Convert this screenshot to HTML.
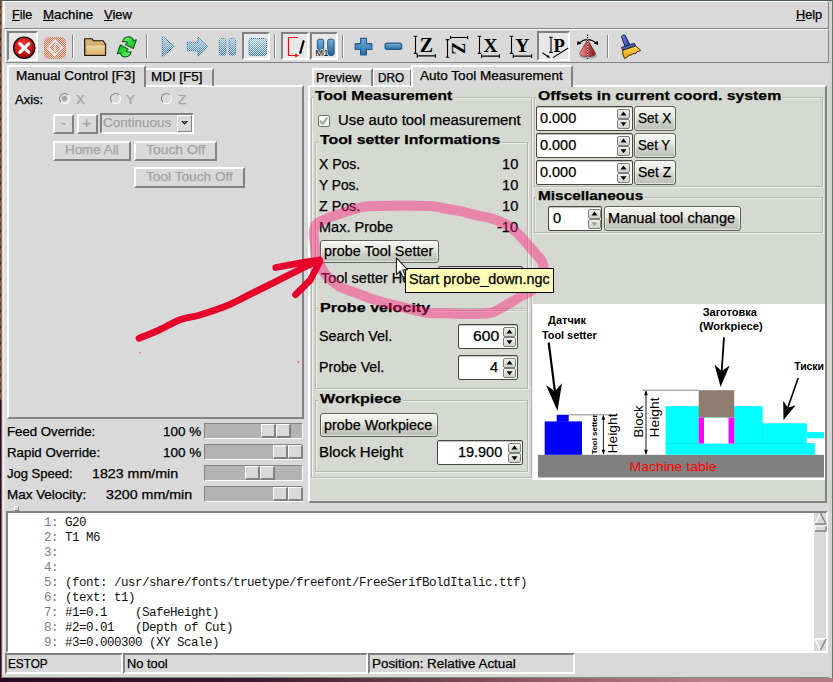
<!DOCTYPE html>
<html><head><meta charset="utf-8"><title>AXIS</title>
<style>
html,body{margin:0;padding:0;background:#d9d9d9;}
#root{position:relative;width:833px;height:682px;overflow:hidden;background:#d9d9d9;font-family:"Liberation Sans",sans-serif;}
#root div,#root svg{position:absolute;box-sizing:border-box;}
.t{position:absolute;white-space:pre;line-height:20px;height:20px;transform-origin:0 0;-webkit-text-stroke:0.25px currentColor;}
.t u{text-decoration:underline;text-underline-offset:1px;}
.sunk{border:2px solid;border-color:#828282 #fff #fff #828282;}
.rais{border:2px solid;border-color:#fff #828282 #828282 #fff;}
.sunk1{border:1px solid;border-color:#828282 #fff #fff #828282;}
.rais1{border:1px solid;border-color:#fff #828282 #828282 #fff;}
.gbtn{border:1px solid #5f6259;border-radius:3px;background:linear-gradient(#f5f6f3,#e6e8e2 42%,#d0d3cb 58%,#bbbeb5);box-shadow:inset 0 0 0 1px rgba(255,255,255,.55);}
.gent{border:1px solid #45473f;border-radius:2px;background:#fff;box-shadow:inset 0 1px 1px rgba(0,0,0,.25);}
.gfr{border:1px solid #b4b7ae;box-shadow:inset 1px 1px 0 rgba(255,255,255,.6), 1px 1px 0 rgba(255,255,255,.6);}
.mono{font-family:"Liberation Mono",monospace;-webkit-text-stroke:0;}

</style></head><body>
<div id="root">
<div style="left:0px;top:0px;width:1px;height:400px;background:repeating-linear-gradient(180deg,#6b4020 0,#7a5030 5px,#3a1a10 7px,#a06a40 11px,#5a3018 16px)"></div>
<div style="left:1px;top:0px;width:1px;height:400px;background:#8a7666"></div>
<div style="left:0px;top:400px;width:1px;height:282px;background:#2c0a24"></div>
<div style="left:1px;top:400px;width:1px;height:282px;background:#6a5866"></div>
<div style="left:2px;top:1px;width:1px;height:676px;background:#d2d2d2"></div>
<div style="left:0px;top:0px;width:833px;height:1px;background:#4a5853"></div>
<div style="left:3px;top:674px;width:830px;height:4px;background:#d6d9d2"></div>
<div style="left:0px;top:678px;width:833px;height:4px;background:linear-gradient(90deg,#2a0a22 0%,#3c1a2c 30%,#6a3e4c 50%,#a06470 70%,#bc7e88 85%,#b47882 100%)"></div>
<div style="left:2px;top:677px;width:829px;height:1px;background:#7c8a80"></div>
<div style="left:829px;top:1px;width:4px;height:677px;background:#d2d6ce"></div>
<div style="left:832px;top:0px;width:1px;height:678px;background:#6e746e"></div>
<div style="left:3px;top:63px;width:1px;height:611px;background:#f2f2f2"></div>
<div style="left:4px;top:63px;width:3px;height:611px;background:#dedede"></div>
<div style="left:3px;top:1px;width:826px;height:28px;border-top:1px solid #fff;border-left:2px solid #fff;border-bottom:1px solid #828282;border-right:1px solid #828282"></div>
<div style="left:5px;top:29px;width:824px;height:34px;border-top:1px solid #fff;border-left:1px solid #fff;border-bottom:1px solid #828282;border-right:1px solid #828282"></div>
<div class="sunk" style="left:7px;top:31px;width:31px;height:30px;background:#e8e8e8"></div>
<div class="sunk" style="left:242px;top:32px;width:28px;height:28px;background:#e8e8e8"></div>
<div class="sunk" style="left:281px;top:32px;width:28px;height:28px;background:#e8e8e8"></div>
<div class="sunk" style="left:310px;top:32px;width:28px;height:28px;background:#e8e8e8"></div>
<div class="sunk" style="left:537px;top:31px;width:33px;height:30px;background:#e8e8e8"></div>
<div style="left:72px;top:35px;width:2px;height:23px;border-left:1px solid #828282;border-right:1px solid #fff"></div>
<div style="left:146px;top:35px;width:2px;height:23px;border-left:1px solid #828282;border-right:1px solid #fff"></div>
<div style="left:274px;top:35px;width:2px;height:23px;border-left:1px solid #828282;border-right:1px solid #fff"></div>
<div style="left:342px;top:35px;width:2px;height:23px;border-left:1px solid #828282;border-right:1px solid #fff"></div>
<div style="left:607px;top:35px;width:2px;height:23px;border-left:1px solid #828282;border-right:1px solid #fff"></div>
<div class="rais" style="left:7px;top:85px;width:297px;height:334px;"></div>
<div style="left:146px;top:68px;width:68px;height:18px;border:2px solid;border-color:#fff #828282 transparent transparent;border-bottom:0;border-left:0"></div>
<div style="left:7px;top:65px;width:139px;height:22px;background:#d9d9d9;border:2px solid;border-color:#fff #828282 transparent #fff;border-bottom:0"></div>
<div style="left:59.2px;top:93.2px;width:11px;height:11px;border-radius:50%;background:#d9d9d9;border:1.5px solid;border-color:#858585 #fff #fff #858585;transform:rotate(0deg)"></div>
<div style="left:110.2px;top:93.2px;width:11px;height:11px;border-radius:50%;background:#d9d9d9;border:1.5px solid;border-color:#858585 #fff #fff #858585;transform:rotate(0deg)"></div>
<div style="left:161.2px;top:93.2px;width:11px;height:11px;border-radius:50%;background:#d9d9d9;border:1.5px solid;border-color:#858585 #fff #fff #858585;transform:rotate(0deg)"></div>
<div style="left:62.2px;top:96.2px;width:5px;height:5px;border-radius:50%;background:#a3a3a3"></div>
<div class="rais" style="left:53px;top:114px;width:21px;height:20px;"></div>
<div class="rais" style="left:77px;top:114px;width:21px;height:20px;"></div>
<div class="sunk" style="left:100px;top:113px;width:94px;height:21px;"></div>
<div class="rais1" style="left:177px;top:115px;width:15px;height:17px;"></div>
<div class="rais" style="left:53px;top:141px;width:78px;height:20px;"></div>
<div class="rais" style="left:134px;top:141px;width:83px;height:20px;"></div>
<div class="rais" style="left:134px;top:167px;width:111px;height:21px;"></div>
<div style="left:204px;top:423px;width:99px;height:16px;background:#b3b3b3;border:1px solid;border-color:#828282 #fff #fff #828282"></div>
<div style="left:261px;top:424px;width:15px;height:14px;background:#d9d9d9;border-style:solid;border-width:1px 2px 2px 1px;border-color:#fff #828282 #828282 #fff"></div>
<div style="left:276px;top:424px;width:15px;height:14px;background:#d9d9d9;border-style:solid;border-width:1px 2px 2px 1px;border-color:#fff #828282 #828282 #fff"></div>
<div style="left:204px;top:444px;width:99px;height:16px;background:#b3b3b3;border:1px solid;border-color:#828282 #fff #fff #828282"></div>
<div style="left:273px;top:445px;width:15px;height:14px;background:#d9d9d9;border-style:solid;border-width:1px 2px 2px 1px;border-color:#fff #828282 #828282 #fff"></div>
<div style="left:288px;top:445px;width:15px;height:14px;background:#d9d9d9;border-style:solid;border-width:1px 2px 2px 1px;border-color:#fff #828282 #828282 #fff"></div>
<div style="left:204px;top:465px;width:99px;height:16px;background:#b3b3b3;border:1px solid;border-color:#828282 #fff #fff #828282"></div>
<div style="left:245px;top:466px;width:15px;height:14px;background:#d9d9d9;border-style:solid;border-width:1px 2px 2px 1px;border-color:#fff #828282 #828282 #fff"></div>
<div style="left:260px;top:466px;width:15px;height:14px;background:#d9d9d9;border-style:solid;border-width:1px 2px 2px 1px;border-color:#fff #828282 #828282 #fff"></div>
<div style="left:204px;top:486px;width:99px;height:16px;background:#b3b3b3;border:1px solid;border-color:#828282 #fff #fff #828282"></div>
<div style="left:273px;top:487px;width:15px;height:14px;background:#d9d9d9;border-style:solid;border-width:1px 2px 2px 1px;border-color:#fff #828282 #828282 #fff"></div>
<div style="left:288px;top:487px;width:15px;height:14px;background:#d9d9d9;border-style:solid;border-width:1px 2px 2px 1px;border-color:#fff #828282 #828282 #fff"></div>
<div class="rais" style="left:308px;top:85px;width:519px;height:418px;background:#d6d9d1"></div>
<div style="left:312px;top:68px;width:61px;height:18px;border:2px solid;border-color:#fff #828282 transparent #fff;border-bottom:0"></div>
<div style="left:373px;top:68px;width:39px;height:18px;border:2px solid;border-color:#fff #828282 transparent #fff;border-bottom:0;border-left-width:1px"></div>
<div style="left:411px;top:65px;width:162px;height:22px;background:#d9d9d9;border:2px solid;border-color:#fff #828282 transparent #fff;border-bottom:0"></div>
<div class="gfr" style="left:311px;top:97px;width:221px;height:381px;"></div>
<div class="gfr" style="left:315px;top:142px;width:213px;height:169px;"></div>
<div class="gfr" style="left:315px;top:308px;width:213px;height:81px;"></div>
<div class="gfr" style="left:315px;top:400px;width:213px;height:72px;"></div>
<div class="gfr" style="left:534px;top:97px;width:289px;height:90px;"></div>
<div class="gfr" style="left:534px;top:197px;width:289px;height:36px;"></div>
<div style="left:314px;top:90px;width:140px;height:14px;background:#d6d9d1"></div>
<div style="left:318px;top:136px;width:184px;height:14px;background:#d6d9d1"></div>
<div style="left:318px;top:302px;width:114px;height:14px;background:#d6d9d1"></div>
<div style="left:318px;top:393px;width:85px;height:14px;background:#d6d9d1"></div>
<div style="left:536px;top:90px;width:247px;height:14px;background:#d6d9d1"></div>
<div style="left:536px;top:190px;width:109px;height:14px;background:#d6d9d1"></div>
<div style="left:318px;top:115px;width:12px;height:12px;background:linear-gradient(#fff,#eef0ec);border:1px solid #6f7269;border-radius:2px"></div>
<div class="gbtn" style="left:320px;top:239.5px;width:119px;height:23.5px;"></div>
<div class="gent" style="left:438px;top:266px;width:85px;height:24px;"></div>
<div class="gent" style="left:458px;top:324px;width:60px;height:25px;"></div>
<div class="gent" style="left:458px;top:355px;width:60px;height:25px;"></div>
<div class="gbtn" style="left:320px;top:413px;width:118px;height:24px;"></div>
<div class="gent" style="left:437px;top:440px;width:86px;height:25px;"></div>
<div class="gent" style="left:536px;top:106px;width:97px;height:25px;"></div>
<div class="gbtn" style="left:634px;top:106px;width:42px;height:25px;"></div>
<div class="gent" style="left:536px;top:133px;width:97px;height:25px;"></div>
<div class="gbtn" style="left:634px;top:133px;width:42px;height:25px;"></div>
<div class="gent" style="left:536px;top:160px;width:97px;height:25px;"></div>
<div class="gbtn" style="left:634px;top:160px;width:42px;height:25px;"></div>
<div class="gent" style="left:548px;top:206px;width:54px;height:25px;"></div>
<div class="gbtn" style="left:604px;top:206px;width:137px;height:25px;"></div>
<div style="left:533px;top:304px;width:292px;height:176px;background:#fff"></div>
<div class="sunk" style="left:6px;top:511px;width:822px;height:142px;background:#fff"></div>
<div style="left:814px;top:513px;width:12px;height:138px;background:#d9d9d9"></div>
<div class="sunk" style="left:5px;top:653px;width:118px;height:21px;"></div>
<div class="sunk" style="left:123px;top:653px;width:245px;height:21px;"></div>
<div class="sunk" style="left:368px;top:653px;width:207px;height:21px;"></div>
<svg style="left:0;top:29px" width="833" height="34" viewBox="0 29 833 34">
<defs>
<pattern id="st2" width="2" height="2" patternUnits="userSpaceOnUse"><rect x="0" y="0" width="1" height="1" fill="#e8e8e8"/><rect x="1" y="1" width="1" height="1" fill="#e8e8e8"/></pattern>
<pattern id="st" width="2" height="2" patternUnits="userSpaceOnUse"><rect x="0" y="0" width="1" height="1" fill="#d9d9d9"/><rect x="1" y="1" width="1" height="1" fill="#d9d9d9"/></pattern>
<linearGradient id="gb" x1="0" y1="0" x2="0" y2="1"><stop offset="0" stop-color="#9fd4ee"/><stop offset="1" stop-color="#1f6fa8"/></linearGradient>
<linearGradient id="gb2" x1="0" y1="0" x2="0" y2="1"><stop offset="0" stop-color="#6fb2e0"/><stop offset="1" stop-color="#2a6c9e"/></linearGradient>
<linearGradient id="gbar" x1="0" y1="0" x2="0" y2="1"><stop offset="0" stop-color="#78b0dc"/><stop offset="1" stop-color="#1c5f96"/></linearGradient>
<radialGradient id="gr" cx="0.4" cy="0.3" r="0.8"><stop offset="0" stop-color="#ee3838"/><stop offset="0.6" stop-color="#c81010"/><stop offset="1" stop-color="#8c0000"/></radialGradient>
<linearGradient id="gf" x1="0" y1="0" x2="0" y2="1"><stop offset="0" stop-color="#f3d9a4"/><stop offset="1" stop-color="#d8ae68"/></linearGradient>
<linearGradient id="gc" x1="0" y1="0" x2="1" y2="0"><stop offset="0" stop-color="#f4a0a0"/><stop offset="0.45" stop-color="#d04848"/><stop offset="1" stop-color="#7a1c1c"/></linearGradient>
<linearGradient id="gh" x1="0" y1="0" x2="1" y2="0"><stop offset="0" stop-color="#6f8fe0"/><stop offset="1" stop-color="#2a3f98"/></linearGradient>
<linearGradient id="gy" x1="0" y1="0" x2="0" y2="1"><stop offset="0" stop-color="#ffd84a"/><stop offset="1" stop-color="#e89a10"/></linearGradient>
<linearGradient id="gg" x1="0" y1="0" x2="1" y2="1"><stop offset="0" stop-color="#84f884"/><stop offset="0.5" stop-color="#30d838"/><stop offset="1" stop-color="#14b01c"/></linearGradient>
</defs>
<circle cx="24.2" cy="47.7" r="10.6" fill="url(#gr)" stroke="#1a0000" stroke-width="1.4"/>
<path d="M19.8,43.6 L28.8,52.4 M28.8,43.6 L19.8,52.4" stroke="#fff" stroke-width="3.2" stroke-linecap="round"/>
<rect x="44" y="37" width="22" height="22" rx="5" fill="#de7248"/>
<path d="M55,40.5 L62,47.8 L55,55.2 L48,47.8 Z" fill="none" stroke="#f4f0ee" stroke-width="2"/>
<path d="M55,44 V52" stroke="#f4f0ee" stroke-width="1.4"/>
<rect x="44" y="37" width="22" height="22" fill="url(#st)"/>
<path d="M84.7,55.3 V38.7 H91.8 L93.3,40.7 H103.1 L105.6,44.5 V55.3 Z" fill="#d9b474" stroke="#0c0800" stroke-width="1.15" stroke-linejoin="round"/>
<path d="M86.1,54.7 V46.6 Q86.1,44.9 88,44.9 H105 V54.7 Z" fill="url(#gf)" stroke="#a8844a" stroke-width="0.5"/>
<g transform="translate(126.8,46.8) scale(0.94)"><path d="M-4.6,-5.3 C-4,-8 -1.5,-10.6 1.8,-10.7 C4.5,-10.7 6.3,-9 6.9,-6.7 L10.2,-7.5 L6.9,1.9 L-1.5,-2.5 L0.9,-4.6 C0,-5.8 -2,-5.8 -4.6,-5.3 Z" fill="url(#gg)" stroke="#085210" stroke-width="1.1" stroke-linejoin="round"/><path d="M-4.6,-5.3 C-4,-8 -1.5,-10.6 1.8,-10.7 C4.5,-10.7 6.3,-9 6.9,-6.7 L10.2,-7.5 L6.9,1.9 L-1.5,-2.5 L0.9,-4.6 C0,-5.8 -2,-5.8 -4.6,-5.3 Z" transform="rotate(180)" fill="url(#gg)" stroke="#085210" stroke-width="1.1" stroke-linejoin="round"/></g>
<path d="M162.3,36.3 L174.4,46.5 L162.3,56.8 Z" fill="url(#gb)" stroke="#1a5c94" stroke-width="1"/>
<path d="M187.3,42.3 H198 V36.6 L208.3,46.5 L198,56.6 V50.8 H187.3 Z" fill="url(#gb)" stroke="#1a5c94" stroke-width="1" stroke-linejoin="round"/>
<rect x="219.3" y="38.3" width="6.6" height="16.8" rx="2" fill="url(#gb)" stroke="#1a5c94"/>
<rect x="229.1" y="38.3" width="6.6" height="16.8" rx="2" fill="url(#gb)" stroke="#1a5c94"/>
<rect x="249" y="38.6" width="17.4" height="16.8" rx="2" fill="url(#gb)" stroke="#1a5c94"/>
<rect x="161" y="35" width="15" height="23" fill="url(#st)"/>
<rect x="186" y="35" width="24" height="23" fill="url(#st)"/>
<rect x="218" y="37" width="19" height="19" fill="url(#st)"/>
<rect x="248" y="38" width="19" height="18" fill="url(#st2)"/>
<path d="M298,37.5 H288.5 V55.5 H296" fill="none" stroke="#ff0000" stroke-width="1.2"/>
<path d="M295.2,53.4 L299,55.5 L295.2,57.6 Z" fill="#ff0000"/>
<path d="M303.8,40.4 L300.1,53.6" stroke="#000" stroke-width="2.1"/>
<rect x="317.3" y="39.2" width="6.4" height="16.2" rx="2" fill="url(#gbar)" stroke="#1d4f7e" stroke-width="0.9"/>
<rect x="327.7" y="39.2" width="6.4" height="16.2" rx="2" fill="url(#gbar)" stroke="#1d4f7e" stroke-width="0.9"/>
<text x="315.3" y="56.3" font-family="Liberation Sans" font-size="9.2" fill="#000" stroke="#f0f0f0" stroke-width="1.3" paint-order="stroke" textLength="13.2" lengthAdjust="spacingAndGlyphs">M1</text>
<path d="M360.6,38.3 h5.8 v5.4 h5.4 v5.8 h-5.4 v5.4 h-5.8 v-5.4 h-5.4 v-5.8 h5.4 z" fill="url(#gb2)" stroke="#1f5a8c" stroke-width="1.2" stroke-linejoin="round"/>
<rect x="385.1" y="43.2" width="16.6" height="6.2" rx="2.2" fill="url(#gb2)" stroke="#1f5a8c" stroke-width="1.2"/>
<path d="M415.5,36.2 V53.4 M413.7,36.2 H417.3 M413.7,53.4 H417.3" stroke="#000" stroke-width="1.1" fill="none"/>
<text x="419.8" y="52.3" font-family="Liberation Serif" font-weight="bold" font-size="20" fill="#000" >Z</text>
<path d="M417.2,55.9 H435.4 M417.2,54.1 V57.699999999999996 M435.4,54.1 V57.699999999999996" stroke="#000" stroke-width="1.1" fill="none"/>
<path d="M447.5,39.6 V57.2 M445.7,39.6 H449.3 M445.7,57.2 H449.3" stroke="#000" stroke-width="1.1" fill="none"/>
<path d="M450.6,37.5 H467.6 M450.6,35.7 V39.3 M467.6,35.7 V39.3" stroke="#000" stroke-width="1.1" fill="none"/>
<g transform="translate(451.8,42.6) rotate(90)"><text x="0" y="0" font-family="Liberation Serif" font-weight="bold" font-size="18" fill="#000" >Z</text></g>
<path d="M479.5,36.2 V53.4 M477.7,36.2 H481.3 M477.7,53.4 H481.3" stroke="#000" stroke-width="1.1" fill="none"/>
<text x="483.4" y="52.3" font-family="Liberation Serif" font-weight="bold" font-size="19.5" fill="#000" >X</text>
<path d="M481.6,56.1 H499.4 M481.6,54.300000000000004 V57.9 M499.4,54.300000000000004 V57.9" stroke="#000" stroke-width="1.1" fill="none"/>
<path d="M511.5,36.2 V53.4 M509.7,36.2 H513.3 M509.7,53.4 H513.3" stroke="#000" stroke-width="1.1" fill="none"/>
<text x="515.2" y="52.3" font-family="Liberation Serif" font-weight="bold" font-size="19.5" fill="#000" >Y</text>
<path d="M513.2,56.1 H531.6 M513.2,54.300000000000004 V57.9 M531.6,54.300000000000004 V57.9" stroke="#000" stroke-width="1.1" fill="none"/>
<path d="M551,37.2 V52.4 M549.2,37.2 H552.8 M549.2,52.4 H552.8" stroke="#000" stroke-width="1.1" fill="none"/>
<text x="553.6" y="51.9" font-family="Liberation Serif" font-weight="bold" font-size="18.6" fill="#000" >P</text>
<path d="M542.4,52.8 L549.4,57.4 M553,57.6 L568.2,48" stroke="#000" stroke-width="1.1" fill="none"/>
<path d="M549.8,57.8 L546.2,57.2 L548,54.8 Z" fill="#000"/>
<ellipse cx="588.5" cy="56" rx="9" ry="3" fill="#8c8c8c" opacity="0.55"/>
<path d="M587.6,39.4 L579.6,53.6 A8,3.2 0 0 0 595.6,53.6 Z" fill="url(#gc)" stroke="#5a1010" stroke-width="0.6"/>
<path d="M578.6,43.4 Q587.6,35.6 596.6,43.4" stroke="#000" stroke-width="1.2" fill="none"/>
<path d="M577,45 L577.6,40.8 L581.4,43.6 Z M598.2,45 L597.6,40.8 L593.8,43.6 Z" fill="#000"/>
<path d="M587.6,34.4 V59" stroke="#fff" stroke-width="1.2"/>
<path d="M587.6,34.4 V59" stroke="#000" stroke-width="1.2" stroke-dasharray="1.3,1.3"/>
<path d="M621.4,36.4 Q622.6,34.4 625,35.2 L629.6,44.2 L625,46.4 Z" fill="url(#gh)" stroke="#101a50" stroke-width="1" stroke-linejoin="round"/>
<path d="M621.6,47.4 L634.3,43.3 L635.6,46 L622.8,50.4 Z" fill="#4a66c0" stroke="#101a50" stroke-width="0.9" stroke-linejoin="round"/>
<path d="M622.7,50.3 L635.5,46 L640.8,50.4 L636.6,52 L636,53.4 L632.6,53.8 L631.5,55 L629,55.2 L628.4,56.2 L624.6,58.6 Q622.2,55 622.7,50.3 Z" fill="url(#gy)" stroke="#2a1a00" stroke-width="0.9" stroke-linejoin="round"/>
</svg>
<span class="t mono" style="left:9px;top:512.97px;font-size:12.5px;letter-spacing:-0.5px;color:#111"><span style="color:#808080">     1:</span> G20</span>
<span class="t mono" style="left:9px;top:527.97px;font-size:12.5px;letter-spacing:-0.5px;color:#111"><span style="color:#808080">     2:</span> T1 M6</span>
<span class="t mono" style="left:9px;top:542.97px;font-size:12.5px;letter-spacing:-0.5px;color:#111"><span style="color:#808080">     3:</span> </span>
<span class="t mono" style="left:9px;top:557.97px;font-size:12.5px;letter-spacing:-0.5px;color:#111"><span style="color:#808080">     4:</span> </span>
<span class="t mono" style="left:9px;top:572.97px;font-size:12.5px;letter-spacing:-0.5px;color:#111"><span style="color:#808080">     5:</span> (font: /usr/share/fonts/truetype/freefont/FreeSerifBoldItalic.ttf)</span>
<span class="t mono" style="left:9px;top:587.97px;font-size:12.5px;letter-spacing:-0.5px;color:#111"><span style="color:#808080">     6:</span> (text: t1)</span>
<span class="t mono" style="left:9px;top:602.97px;font-size:12.5px;letter-spacing:-0.5px;color:#111"><span style="color:#808080">     7:</span> #1=0.1    (SafeHeight)</span>
<span class="t mono" style="left:9px;top:617.97px;font-size:12.5px;letter-spacing:-0.5px;color:#111"><span style="color:#808080">     8:</span> #2=0.01   (Depth of Cut)</span>
<span class="t mono" style="left:9px;top:632.97px;font-size:12.5px;letter-spacing:-0.5px;color:#111"><span style="color:#808080">     9:</span> #3=0.000300 (XY Scale)</span>
<svg style="left:814px;top:512px" width="13" height="140" viewBox="0 0 13 140"><path d="M6.5,1 L1,12 H12 Z" fill="#d9d9d9"/><path d="M6.5,1 L1,12" stroke="#fff" stroke-width="1.4"/><path d="M6.5,1 L12,12 H1" stroke="#828282" stroke-width="1.4" fill="none"/><rect x="1" y="14" width="11" height="5" fill="#d9d9d9"/><path d="M1,19 V14 H12" stroke="#fff" stroke-width="1.2" fill="none"/><path d="M12,14 V19 H1" stroke="#828282" stroke-width="1.4" fill="none"/><path d="M1,127 H12 L6.5,138 Z" fill="#d9d9d9"/><path d="M12,127 H1 L6.5,138" stroke="#fff" stroke-width="1.4" fill="none"/><path d="M6.5,138 L12,127" stroke="#828282" stroke-width="1.4"/></svg>
<div class="rais1" style="left:14px;top:506px;width:5px;height:5px;"></div>
<svg style="left:177px;top:115px" width="15" height="17" viewBox="177 115 15 17"><path d="M181.2,121 L184.6,124.8 L188,121 L186.4,121 L184.6,123 L182.8,121 Z" fill="#000"/><path d="M183,121 h3.2 l-1.6,1.6 Z" fill="#555"/></svg>
<div style="left:617px;top:108.5px;width:13px;height:10px;border:1px solid #7d8078;border-radius:2px;background:linear-gradient(#f1f2ee,#cfd2ca)"></div><svg style="left:0;top:0" width="833" height="682"><path d="M620.5,115.5 L623.5,111.5 L626.5,115.5 Z" fill="#000"/></svg><div style="left:617px;top:119.0px;width:13px;height:10px;border:1px solid #7d8078;border-radius:2px;background:linear-gradient(#f1f2ee,#cfd2ca)"></div><svg style="left:0;top:0" width="833" height="682"><path d="M620.5,122.2 L623.5,126.2 L626.5,122.2 Z" fill="#000"/></svg>
<div style="left:617px;top:135.5px;width:13px;height:10px;border:1px solid #7d8078;border-radius:2px;background:linear-gradient(#f1f2ee,#cfd2ca)"></div><svg style="left:0;top:0" width="833" height="682"><path d="M620.5,142.5 L623.5,138.5 L626.5,142.5 Z" fill="#000"/></svg><div style="left:617px;top:146.0px;width:13px;height:10px;border:1px solid #7d8078;border-radius:2px;background:linear-gradient(#f1f2ee,#cfd2ca)"></div><svg style="left:0;top:0" width="833" height="682"><path d="M620.5,149.2 L623.5,153.2 L626.5,149.2 Z" fill="#000"/></svg>
<div style="left:617px;top:162.5px;width:13px;height:10px;border:1px solid #7d8078;border-radius:2px;background:linear-gradient(#f1f2ee,#cfd2ca)"></div><svg style="left:0;top:0" width="833" height="682"><path d="M620.5,169.5 L623.5,165.5 L626.5,169.5 Z" fill="#000"/></svg><div style="left:617px;top:173.0px;width:13px;height:10px;border:1px solid #7d8078;border-radius:2px;background:linear-gradient(#f1f2ee,#cfd2ca)"></div><svg style="left:0;top:0" width="833" height="682"><path d="M620.5,176.2 L623.5,180.2 L626.5,176.2 Z" fill="#000"/></svg>
<div style="left:588px;top:208.5px;width:13px;height:10px;border:1px solid #7d8078;border-radius:2px;background:linear-gradient(#f1f2ee,#cfd2ca)"></div><svg style="left:0;top:0" width="833" height="682"><path d="M591.5,215.5 L594.5,211.5 L597.5,215.5 Z" fill="#000"/></svg><div style="left:588px;top:219.0px;width:13px;height:10px;border:1px solid #7d8078;border-radius:2px;background:linear-gradient(#f1f2ee,#cfd2ca)"></div><svg style="left:0;top:0" width="833" height="682"><path d="M591.5,222.2 L594.5,226.2 L597.5,222.2 Z" fill="#9a9d96"/></svg>
<div style="left:503px;top:326.5px;width:13px;height:10px;border:1px solid #7d8078;border-radius:2px;background:linear-gradient(#f1f2ee,#cfd2ca)"></div><svg style="left:0;top:0" width="833" height="682"><path d="M506.5,333.5 L509.5,329.5 L512.5,333.5 Z" fill="#000"/></svg><div style="left:503px;top:337.0px;width:13px;height:10px;border:1px solid #7d8078;border-radius:2px;background:linear-gradient(#f1f2ee,#cfd2ca)"></div><svg style="left:0;top:0" width="833" height="682"><path d="M506.5,340.2 L509.5,344.2 L512.5,340.2 Z" fill="#000"/></svg>
<div style="left:503px;top:357.5px;width:13px;height:10px;border:1px solid #7d8078;border-radius:2px;background:linear-gradient(#f1f2ee,#cfd2ca)"></div><svg style="left:0;top:0" width="833" height="682"><path d="M506.5,364.5 L509.5,360.5 L512.5,364.5 Z" fill="#000"/></svg><div style="left:503px;top:368.0px;width:13px;height:10px;border:1px solid #7d8078;border-radius:2px;background:linear-gradient(#f1f2ee,#cfd2ca)"></div><svg style="left:0;top:0" width="833" height="682"><path d="M506.5,371.2 L509.5,375.2 L512.5,371.2 Z" fill="#000"/></svg>
<div style="left:508px;top:442.5px;width:13px;height:10px;border:1px solid #7d8078;border-radius:2px;background:linear-gradient(#f1f2ee,#cfd2ca)"></div><svg style="left:0;top:0" width="833" height="682"><path d="M511.5,449.5 L514.5,445.5 L517.5,449.5 Z" fill="#000"/></svg><div style="left:508px;top:453.0px;width:13px;height:10px;border:1px solid #7d8078;border-radius:2px;background:linear-gradient(#f1f2ee,#cfd2ca)"></div><svg style="left:0;top:0" width="833" height="682"><path d="M511.5,456.2 L514.5,460.2 L517.5,456.2 Z" fill="#000"/></svg>
<svg style="left:317px;top:114px" width="14" height="14" viewBox="0 0 14 14"><path d="M3.6,7.4 L5.8,9.8 L9.8,4.4" stroke="#93aca5" stroke-width="2" fill="none" stroke-linecap="round" stroke-linejoin="round"/></svg>
<svg style="left:533px;top:304px" width="291" height="176" viewBox="533 304 291 176">
<rect x="533" y="304" width="291" height="176" fill="#fff"/>
<rect x="538" y="454.8" width="286" height="22.7" fill="#808080"/>
<rect x="544.7" y="421.4" width="37.3" height="33.4" fill="#0000ff"/><rect x="556.7" y="414.8" width="12" height="7" fill="#0000ff"/>
<rect x="665.6" y="406.2" width="97.1" height="38" fill="#00ffff"/>
<rect x="762.7" y="423.3" width="44.1" height="21" fill="#00ffff"/>
<rect x="806.8" y="432.1" width="17.3" height="6.1" fill="#00ffff"/>
<rect x="665.6" y="443.6" width="149.2" height="11.2" fill="#00ffff"/>
<path d="M665.6,443.6 H814.8 M762.7,423.3 V443.6" stroke="#00d8e0" stroke-width="0.6"/>
<rect x="698.7" y="417.4" width="35.5" height="26.2" fill="#fff"/>
<rect x="698.7" y="417.4" width="5.3" height="26.2" fill="#ff00ff"/><rect x="728.6" y="417.4" width="5.6" height="26.2" fill="#ff00ff"/>
<rect x="698.7" y="390.2" width="35.5" height="27.2" fill="#917c6f"/>
<path d="M568.7,414.8 H618 M642.6,390.2 H698.7" stroke="#555" stroke-width="0.7"/>
<path d="M603.4,415.8 V453.8" stroke="#000" stroke-width="0.9"/><path d="M603.4,414.8 l-1.8,5 h3.6 Z M603.4,454.8 l-1.8,-5 h3.6 Z" fill="#000"/>
<path d="M646,391.2 V453.8" stroke="#000" stroke-width="0.9"/><path d="M646,390.2 l-1.8,5 h3.6 Z M646,454.8 l-1.8,-5 h3.6 Z" fill="#000"/>
<text x="548.1" y="324.4" font-family="Liberation Sans" font-weight="bold" font-size="11.4" fill="#000" textLength="37.89999999999998" lengthAdjust="spacingAndGlyphs">Датчик</text>
<text x="542" y="338.8" font-family="Liberation Sans" font-weight="bold" font-size="11.4" fill="#000" textLength="54.700000000000045" lengthAdjust="spacingAndGlyphs">Tool setter</text>
<text x="702.7" y="316" font-family="Liberation Sans" font-weight="bold" font-size="11.4" fill="#000" textLength="54.19999999999993" lengthAdjust="spacingAndGlyphs">Заготовка</text>
<text x="699.2" y="330.2" font-family="Liberation Sans" font-weight="bold" font-size="11.4" fill="#000" textLength="63.5" lengthAdjust="spacingAndGlyphs">(Workpiece)</text>
<text x="794.2" y="370" font-family="Liberation Sans" font-weight="bold" font-size="11.4" fill="#000" textLength="29.799999999999955" lengthAdjust="spacingAndGlyphs">Тиски</text>
<text x="629.5" y="470.8" font-family="Liberation Sans" font-weight="normal" font-size="12.4" fill="#ff0000" textLength="87.10000000000002" lengthAdjust="spacingAndGlyphs">Machine table</text>
<text transform="translate(597.2,454.3) rotate(-90)" font-family="Liberation Sans" font-weight="bold" font-size="7.6" fill="#000" textLength="40" lengthAdjust="spacingAndGlyphs">Tool setter</text>
<text transform="translate(617.3,453.5) rotate(-90)" font-family="Liberation Sans" font-weight="normal" font-size="13.2" fill="#000" textLength="40" lengthAdjust="spacingAndGlyphs">Height</text>
<text transform="translate(643.2,437.4) rotate(-90)" font-family="Liberation Sans" font-weight="normal" font-size="13.2" fill="#000" textLength="32" lengthAdjust="spacingAndGlyphs">Block</text>
<text transform="translate(659.2,437.4) rotate(-90)" font-family="Liberation Sans" font-weight="normal" font-size="13.2" fill="#000" textLength="40" lengthAdjust="spacingAndGlyphs">Height</text>
<path d="M548.7,342.7 L554.9,391.2" stroke="#000" stroke-width="2.2"/><path d="M557.5,411.0 L546.1,385.2 L554.9,391.2 L562.0,383.2 Z" fill="#000"/>
<path d="M724.0,337.4 L721.7,371.0" stroke="#000" stroke-width="1.8"/><path d="M720.6,387.0 L714.5,364.5 L721.7,371.0 L729.7,365.6 Z" fill="#000"/>
<path d="M798.2,378.0 L787.8,407.7" stroke="#000" stroke-width="1.6"/><path d="M783.5,420.0 L783.2,400.8 L787.8,407.7 L795.7,405.2 Z" fill="#000"/>
</svg>
<span class="t" style="left:12.4px;top:4.67px;font-size:12.5px;font-weight:normal;color:#000;transform:scaleX(1.0022);font-family:'Liberation Sans';"><u>F</u>ile</span>
<span class="t" style="left:43.4px;top:4.67px;font-size:12.5px;font-weight:normal;color:#000;transform:scaleX(1.0624);font-family:'Liberation Sans';"><u>M</u>achine</span>
<span class="t" style="left:104.0px;top:4.67px;font-size:12.5px;font-weight:normal;color:#000;transform:scaleX(1.0381);font-family:'Liberation Sans';"><u>V</u>iew</span>
<span class="t" style="left:796.4px;top:4.67px;font-size:12.5px;font-weight:normal;color:#000;transform:scaleX(1.0187);font-family:'Liberation Sans';"><u>H</u>elp</span>
<span class="t" style="left:16.4px;top:65.67px;font-size:12.5px;font-weight:normal;color:#000;transform:scaleX(1.0858);font-family:'Liberation Sans';">Manual Control [F3]</span>
<span class="t" style="left:151.4px;top:67.17px;font-size:12.5px;font-weight:normal;color:#000;transform:scaleX(1.0747);font-family:'Liberation Sans';">MDI [F5]</span>
<span class="t" style="left:316.4px;top:67.67px;font-size:12.5px;font-weight:normal;color:#000;transform:scaleX(1.0164);font-family:'Liberation Sans';">Preview</span>
<span class="t" style="left:378.4px;top:67.67px;font-size:12.5px;font-weight:normal;color:#000;transform:scaleX(0.9431);font-family:'Liberation Sans';">DRO</span>
<span class="t" style="left:419.9px;top:65.67px;font-size:12.5px;font-weight:normal;color:#000;transform:scaleX(1.0827);font-family:'Liberation Sans';">Auto Tool Measurement</span>
<span class="t" style="left:15.4px;top:89.67px;font-size:12.5px;font-weight:normal;color:#000;transform:scaleX(1.0408);font-family:'Liberation Sans';">Axis:</span>
<span class="t" style="left:75.6px;top:89.67px;font-size:12.5px;font-weight:normal;color:#a3a3a3;transform:scaleX(1.0600);font-family:'Liberation Sans';">X</span>
<span class="t" style="left:126.1px;top:89.67px;font-size:12.5px;font-weight:normal;color:#a3a3a3;transform:scaleX(1.0600);font-family:'Liberation Sans';">Y</span>
<span class="t" style="left:178.0px;top:89.67px;font-size:12.5px;font-weight:normal;color:#a3a3a3;transform:scaleX(1.0600);font-family:'Liberation Sans';">Z</span>
<span class="t" style="left:60.5px;top:112.65px;font-size:14px;font-weight:normal;color:#a3a3a3;transform:scaleX(1.0600);font-family:'Liberation Sans';">-</span>
<span class="t" style="left:82.4px;top:112.80px;font-size:15px;font-weight:normal;color:#a3a3a3;transform:scaleX(1.0600);font-family:'Liberation Sans';">+</span>
<span class="t" style="left:103.4px;top:113.37px;font-size:12.5px;font-weight:normal;color:#a3a3a3;transform:scaleX(1.0783);font-family:'Liberation Sans';">Continuous</span>
<span class="t" style="left:65.0px;top:140.27px;font-size:12.5px;font-weight:normal;color:#a3a3a3;transform:scaleX(1.0713);font-family:'Liberation Sans';">Home All</span>
<span class="t" style="left:145.7px;top:140.27px;font-size:12.5px;font-weight:normal;color:#a3a3a3;transform:scaleX(1.1111);font-family:'Liberation Sans';">Touch Off</span>
<span class="t" style="left:145.7px;top:167.27px;font-size:12.5px;font-weight:normal;color:#a3a3a3;transform:scaleX(1.0937);font-family:'Liberation Sans';">Tool Touch Off</span>
<span class="t" style="left:7.4px;top:421.67px;font-size:12.5px;font-weight:normal;color:#000;transform:scaleX(1.0579);font-family:'Liberation Sans';">Feed Override:</span>
<span class="t" style="left:163.4px;top:421.67px;font-size:12.5px;font-weight:normal;color:#000;transform:scaleX(1.0775);font-family:'Liberation Sans';">100 %</span>
<span class="t" style="left:7.4px;top:442.67px;font-size:12.5px;font-weight:normal;color:#000;transform:scaleX(1.0646);font-family:'Liberation Sans';">Rapid Override:</span>
<span class="t" style="left:163.4px;top:442.67px;font-size:12.5px;font-weight:normal;color:#000;transform:scaleX(1.0775);font-family:'Liberation Sans';">100 %</span>
<span class="t" style="left:6.9px;top:463.67px;font-size:12.5px;font-weight:normal;color:#000;transform:scaleX(1.0387);font-family:'Liberation Sans';">Jog Speed:</span>
<span class="t" style="left:92.4px;top:463.67px;font-size:12.5px;font-weight:normal;color:#000;transform:scaleX(1.1382);font-family:'Liberation Sans';">1823 mm/min</span>
<span class="t" style="left:7.4px;top:484.67px;font-size:12.5px;font-weight:normal;color:#000;transform:scaleX(1.0755);font-family:'Liberation Sans';">Max Velocity:</span>
<span class="t" style="left:106.4px;top:484.67px;font-size:12.5px;font-weight:normal;color:#000;transform:scaleX(1.1382);font-family:'Liberation Sans';">3200 mm/min</span>
<span class="t" style="left:7.9px;top:653.67px;font-size:12.5px;font-weight:normal;color:#000;transform:scaleX(0.9417);font-family:'Liberation Sans';">ESTOP</span>
<span class="t" style="left:126.9px;top:653.67px;font-size:12.5px;font-weight:normal;color:#000;transform:scaleX(1.0275);font-family:'Liberation Sans';">No tool</span>
<span class="t" style="left:371.9px;top:653.67px;font-size:12.5px;font-weight:normal;color:#000;transform:scaleX(1.0715);font-family:'Liberation Sans';">Position: Relative Actual</span>
<span class="t" style="left:315.4px;top:86.32px;font-size:13.5px;font-weight:bold;color:#000;transform:scaleX(1.1599);font-family:'Liberation Sans';">Tool Measurement</span>
<span class="t" style="left:320.4px;top:130.32px;font-size:13.5px;font-weight:bold;color:#000;transform:scaleX(1.1738);font-family:'Liberation Sans';">Tool setter Informations</span>
<span class="t" style="left:320.4px;top:297.82px;font-size:13.5px;font-weight:bold;color:#000;transform:scaleX(1.1940);font-family:'Liberation Sans';">Probe velocity</span>
<span class="t" style="left:320.4px;top:388.62px;font-size:13.5px;font-weight:bold;color:#000;transform:scaleX(1.1936);font-family:'Liberation Sans';">Workpiece</span>
<span class="t" style="left:538.4px;top:85.82px;font-size:13.5px;font-weight:bold;color:#000;transform:scaleX(1.1703);font-family:'Liberation Sans';">Offsets in current coord. system</span>
<span class="t" style="left:538.4px;top:185.82px;font-size:13.5px;font-weight:bold;color:#000;transform:scaleX(1.1398);font-family:'Liberation Sans';">Miscellaneous</span>
<span class="t" style="left:337.9px;top:110.92px;font-size:13.8px;font-weight:normal;color:#000;transform:scaleX(1.0780);font-family:'Liberation Sans';">Use auto tool measurement</span>
<span class="t" style="left:319.4px;top:154.92px;font-size:13.8px;font-weight:normal;color:#000;transform:scaleX(1.0134);font-family:'Liberation Sans';">X Pos.</span>
<span class="t" style="left:502.4px;top:154.92px;font-size:13.8px;font-weight:normal;color:#000;transform:scaleX(1.0600);font-family:'Liberation Sans';">10</span>
<span class="t" style="left:319.4px;top:175.92px;font-size:13.8px;font-weight:normal;color:#000;transform:scaleX(0.9949);font-family:'Liberation Sans';">Y Pos.</span>
<span class="t" style="left:502.4px;top:175.92px;font-size:13.8px;font-weight:normal;color:#000;transform:scaleX(1.0600);font-family:'Liberation Sans';">10</span>
<span class="t" style="left:319.4px;top:196.92px;font-size:13.8px;font-weight:normal;color:#000;transform:scaleX(1.0332);font-family:'Liberation Sans';">Z Pos.</span>
<span class="t" style="left:502.4px;top:196.92px;font-size:13.8px;font-weight:normal;color:#000;transform:scaleX(1.0600);font-family:'Liberation Sans';">10</span>
<span class="t" style="left:319.4px;top:217.92px;font-size:13.8px;font-weight:normal;color:#000;transform:scaleX(1.0516);font-family:'Liberation Sans';">Max. Probe</span>
<span class="t" style="left:496.9px;top:217.92px;font-size:13.8px;font-weight:normal;color:#000;transform:scaleX(1.0600);font-family:'Liberation Sans';">-10</span>
<span class="t" style="left:324.4px;top:241.92px;font-size:13.8px;font-weight:normal;color:#000;transform:scaleX(1.0417);font-family:'Liberation Sans';">probe Tool Setter</span>
<span class="t" style="left:320.9px;top:269.22px;font-size:13.8px;font-weight:normal;color:#000;transform:scaleX(1.0496);font-family:'Liberation Sans';">Tool setter Height</span>
<span class="t" style="left:319.4px;top:327.42px;font-size:13.8px;font-weight:normal;color:#000;transform:scaleX(1.0374);font-family:'Liberation Sans';">Search Vel.</span>
<span class="t" style="left:473.4px;top:327.42px;font-size:13.8px;font-weight:normal;color:#000;transform:scaleX(1.1376);font-family:'Liberation Sans';">600</span>
<span class="t" style="left:319.4px;top:358.02px;font-size:13.8px;font-weight:normal;color:#000;transform:scaleX(1.0240);font-family:'Liberation Sans';">Probe Vel.</span>
<span class="t" style="left:489.9px;top:358.02px;font-size:13.8px;font-weight:normal;color:#000;transform:scaleX(1.0600);font-family:'Liberation Sans';">4</span>
<span class="t" style="left:324.4px;top:415.92px;font-size:13.8px;font-weight:normal;color:#000;transform:scaleX(1.0399);font-family:'Liberation Sans';">probe Workpiece</span>
<span class="t" style="left:319.4px;top:442.92px;font-size:13.8px;font-weight:normal;color:#000;transform:scaleX(1.0871);font-family:'Liberation Sans';">Block Height</span>
<span class="t" style="left:458.4px;top:442.92px;font-size:13.8px;font-weight:normal;color:#000;transform:scaleX(1.0473);font-family:'Liberation Sans';">19.900</span>
<span class="t" style="left:540.4px;top:108.72px;font-size:13.8px;font-weight:normal;color:#000;transform:scaleX(1.0483);font-family:'Liberation Sans';">0.000</span>
<span class="t" style="left:540.4px;top:135.72px;font-size:13.8px;font-weight:normal;color:#000;transform:scaleX(1.0483);font-family:'Liberation Sans';">0.000</span>
<span class="t" style="left:540.4px;top:162.72px;font-size:13.8px;font-weight:normal;color:#000;transform:scaleX(1.0483);font-family:'Liberation Sans';">0.000</span>
<span class="t" style="left:638.4px;top:108.72px;font-size:13.8px;font-weight:normal;color:#000;transform:scaleX(0.9837);font-family:'Liberation Sans';">Set X</span>
<span class="t" style="left:638.4px;top:135.72px;font-size:13.8px;font-weight:normal;color:#000;transform:scaleX(0.9612);font-family:'Liberation Sans';">Set Y</span>
<span class="t" style="left:638.4px;top:162.72px;font-size:13.8px;font-weight:normal;color:#000;transform:scaleX(1.0065);font-family:'Liberation Sans';">Set Z</span>
<span class="t" style="left:552.9px;top:208.72px;font-size:13.8px;font-weight:normal;color:#000;transform:scaleX(1.0600);font-family:'Liberation Sans';">0</span>
<span class="t" style="left:608.4px;top:208.72px;font-size:13.8px;font-weight:normal;color:#000;transform:scaleX(1.0561);font-family:'Liberation Sans';">Manual tool change</span>
<svg style="left:0;top:0" width="833" height="682" viewBox="0 0 833 682"><path d="M318.7,222.3 C321.4,220.7 326.5,218.6 331.2,216.8 C335.9,215.0 342.1,212.9 346.8,211.4 C351.5,209.9 355.7,208.7 359.3,207.8 C362.9,207.0 362.9,206.6 368.6,206.3 C374.3,206.0 383.4,205.9 393.6,205.8 C403.8,205.7 421.3,205.4 430,205.9 C438.7,206.4 440.4,207.8 445.6,208.7 C450.8,209.6 456.0,210.3 461.2,211.4 C466.4,212.5 471.6,214.1 476.8,215.3 C482.0,216.5 487.2,217.1 492.4,218.8 C497.6,220.5 503.8,223.0 508,225.4 C512.2,227.8 514.3,230.2 517.4,233.2 C520.5,236.2 523.6,239.9 526.7,243.4 C529.8,246.9 533.5,251.3 536,254.3 C538.5,257.3 540.8,258.9 542,261.2 C543.2,263.5 543.7,265.0 543.5,268.3 C543.3,271.6 543.1,277.2 541,281 C538.9,284.8 534.2,288.6 531,291 C527.8,293.4 525.2,293.8 522,295.6 C518.8,297.4 516.8,299.0 511.9,301.8 C507.0,304.6 498.2,310.4 492.4,312.4 C486.5,314.4 482.0,313.6 476.8,313.9 C471.6,314.1 466.4,314.0 461.2,313.9 C456.0,313.8 450.8,313.5 445.6,313.3 C440.4,313.1 434.8,313.3 430,312.9 C425.2,312.5 421.8,311.8 417,310.8 C412.2,309.8 406.6,308.2 401.4,306.9 C396.2,305.6 391.0,304.4 385.8,303 C380.6,301.6 375.4,300.2 370.2,298.4 C365.0,296.6 359.8,294.4 354.6,292.4 C349.4,290.4 343.7,289.0 339,286.2 C334.3,283.4 329.4,278.9 326.2,275.3 C323.0,271.7 321.6,267.4 320,264.4 C318.4,261.4 317.2,260.4 316.4,257.4 C315.6,254.4 315.5,250.4 315,246.5 C314.5,242.6 313.6,237.3 313.6,234 C313.6,230.7 314.1,228.4 315,226.5 C315.9,224.6 316.0,223.9 318.7,222.3 Z" fill="none" stroke="#ff1777" stroke-opacity="0.43" stroke-width="10" stroke-linejoin="round"/></svg>
<div style="left:405px;top:268px;width:149px;height:25px;background:#fdfbb6;border:1px solid #000"></div>
<span class="t" style="left:409.4px;top:269.82px;font-size:13.8px;font-weight:normal;color:#000;transform:scaleX(1.0422);font-family:'Liberation Sans';">Start probe_down.ngc</span>
<svg style="left:0;top:0" width="833" height="682" viewBox="0 0 833 682">
<path d="M396.4,257.8 L396.4,274.6 L400.2,271 L402.8,277.2 L405.4,276 L402.8,270 L407.4,269.6 Z" fill="#fff" stroke="#222" stroke-width="1.1" stroke-linejoin="round"/>
<g fill="none" stroke="#e8002c" stroke-width="6.8" stroke-linecap="round" stroke-linejoin="round">
<path d="M139,338.3 C142.4,336.9 152.7,332.9 159.6,329.8 C166.5,326.7 174.1,321.9 180.7,319.5 C187.3,317.1 191.7,317.4 199.2,315.2 C206.7,313.0 216.9,309.8 225.7,306.2 C234.5,302.6 243.2,297.7 252,293.4 C260.8,289.1 269.7,284.6 278.5,280.2 C287.3,275.8 298.1,270.3 304.9,267 C311.7,263.7 317.0,261.3 319.4,260.2"/>
<path d="M275.8,267.5 L304.9,262.2 L319.4,260"/>
<path d="M295.6,294.7 L310.2,280.2 L319.6,262"/>
</g>
<path d="M139.5,352 l0.8,1.4 M298,361 l0.6,2.2" stroke="#e8002c" stroke-width="0.8"/>
</svg>

</div>
</body></html>
